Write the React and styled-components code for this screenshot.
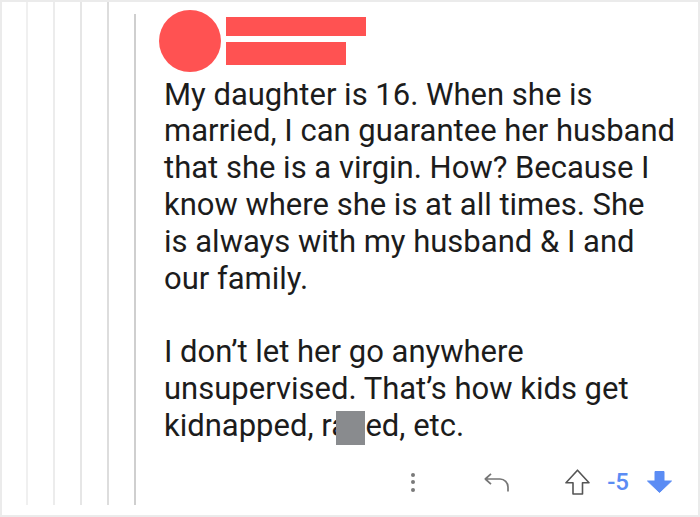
import React from 'react'
import styled, { createGlobalStyle } from 'styled-components'

const GlobalStyle = createGlobalStyle`
    body {
        margin:0;
        background:#fff;
        font-family:Roboto, "Liberation Sans", sans-serif;
    }
`

const Frame = styled.div`
    width:700px;
    height:517px;
    box-sizing:border-box;
    border:2px solid #ebebeb;
    display:flex;
    padding-left:24px;
    overflow:hidden;
`
const Thread = styled.div`
    width:2px;
    flex-shrink:0;
    background:${props => props.color};
    margin-right:${props => props.own ? 0 : 25}px;
    margin-top:${props => props.own ? 12 : 0}px;
    margin-bottom:10px;
`
const Comment = styled.div`
    flex:1;
    display:flex;
    flex-direction:column;
    padding-left:23px;
`
const Header = styled.div`
    display:flex;
    margin-top:8px;
`
const Avatar = styled.div`
    width:62px;
    height:62px;
    border-radius:50%;
    background:#ff5252;
`
const Names = styled.div`
    display:flex;
    flex-direction:column;
    gap:6px;
    padding-top:7px;
    margin-left:5px;
`
const Bar = styled.div`
    background:#ff5252;
    width:${props => props.w}px;
    height:${props => props.h}px;
`
const Body = styled.div`
    width:520px;
    margin:4.6px 0 0 5px;
    font-size:31px;
    line-height:36.8px;
    color:#1c1c1c;
    p {
        margin:0;
    }
    p + p {
        margin-top:36.8px;
    }
`
const Censor = styled.span`
    position:relative;
    &::after {
        content:'';
        position:absolute;
        left:5px;
        right:0;
        top:4px;
        bottom:-1px;
        background:#898b8e;
    }
`
const Actions = styled.div`
    display:flex;
    align-items:center;
    justify-content:flex-end;
    height:30px;
    margin-top:22.6px;
    padding-right:26px;
`
const Dots = styled.div`
    display:flex;
    flex-direction:column;
    gap:3.5px;
    margin-right:69px;
    span {
        width:4px;
        height:4px;
        border-radius:50%;
        background:#7a7a7a;
    }
`
const Icon = styled.svg`
    display:block;
    margin-right:${props => props.gap || 0}px;
`
const Score = styled.span`
    color:#5b8cf4;
    font-size:24px;
    font-weight:500;
    margin-right:18px;
`

const App = () => {
  return (
    <>
      <GlobalStyle/>
      <Frame>
        <Thread color='#f0f0f0'/>
        <Thread color='#ececec'/>
        <Thread color='#e6e6e6'/>
        <Thread color='#dddddd'/>
        <Thread color='#cfcfcf' own/>
        <Comment>
          <Header>
            <Avatar/>
            <Names>
              <Bar w={140} h={19}/>
              <Bar w={120} h={23}/>
            </Names>
          </Header>
          <Body>
            <p>My daughter is 16. When she is married, I can guarantee her husband that she is a virgin. How? Because I know where she is at all times. She<br/>is always with my husband &amp; I and<br/>our family.</p>
            <p>I don’t let her go anywhere unsupervised. That’s how kids get kidnapped, r<Censor>ap</Censor>ed, etc.</p>
          </Body>
          <Actions>
            <Dots><span/><span/><span/></Dots>
            <Icon width="26" height="19" viewBox="0 0 26 19" gap={55}>
              <path d="M7 0.8 L1.3 6 L7 11.2 M1.3 6 H16 a8 8 0 0 1 8 8 V18.5" fill="none" stroke="#767676" strokeWidth="1.7" strokeLinejoin="round"/>
            </Icon>
            <Icon width="25" height="26" viewBox="0 0 25 26" gap={17}>
              <path d="M12.5 1.2 L1 13.8 H8 V25 H17.5 V13.8 H24 Z" fill="none" stroke="#555" strokeWidth="1.6" strokeLinejoin="round"/>
            </Icon>
            <Score>-5</Score>
            <Icon width="25" height="22" viewBox="0 0 25 22">
              <path d="M8 0.5 H17 V10 H24.5 L12.5 21.5 L0.5 10 H8 Z" fill="#5b8cf4" stroke="#5b8cf4" strokeWidth="1" strokeLinejoin="round"/>
            </Icon>
          </Actions>
        </Comment>
      </Frame>
    </>
  )
}

export default App
